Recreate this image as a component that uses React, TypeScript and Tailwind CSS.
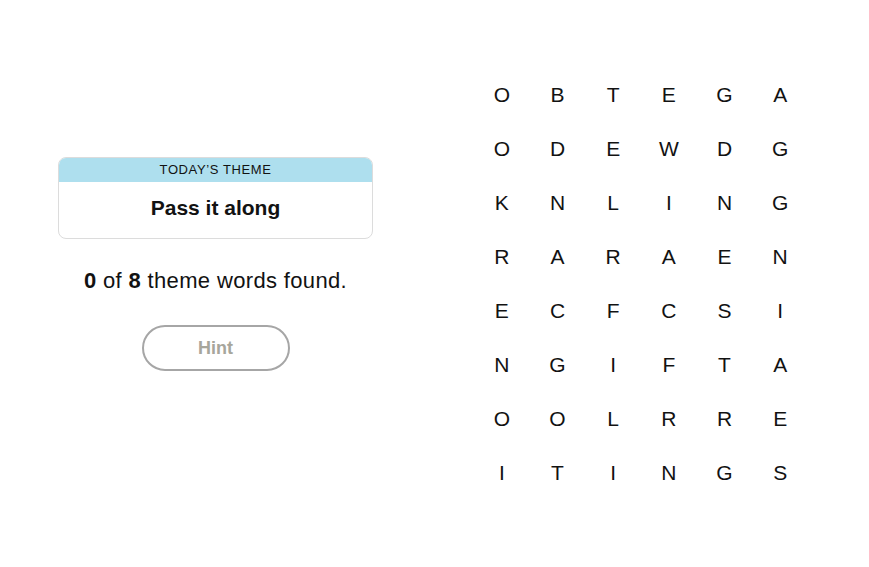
const grid = [
  'OBTEGA',
  'ODEWDG',
  'KNLING',
  'RARAEN',
  'ECFCSI',
  'NGIFTA',
  'OOLRRE',
  'ITINGS',
];

export default function App() {
  return (
    <div className="w-[869px] h-[567px] bg-white text-black font-['Liberation_Sans',Arial,sans-serif]">
      <div className="flex pl-[58px] pt-[68px]">
        {/* Left: theme + progress */}
        <div className="w-[315px] pt-[89px] flex flex-col items-center">
          <div className="w-full rounded-[8px] border border-[#dcdcdc] overflow-hidden">
            <div className="bg-[#aedfee] h-[24px] flex items-center justify-center text-[13px] tracking-[0.6px] text-[#121212]">
              TODAY’S THEME
            </div>
            <div className="h-[56px] pb-[4px] flex items-center justify-center text-[21px] font-bold text-[#121212]">
              Pass it along
            </div>
          </div>
          <p className="mt-[25px] text-[22px] tracking-[0.35px] text-[#121212]">
            <b>0</b> of <b>8</b> theme words found.
          </p>
          <button className="mt-[28px] w-[148px] h-[46px] rounded-full border-2 border-[#a6a6a6] text-[18px] font-bold text-[#a7a69c]">
            Hint
          </button>
        </div>

        {/* Right: letter grid */}
        <div className="ml-[101px] grid grid-cols-6 w-[334px]">
          {grid.flatMap((row, r) =>
            row.split('').map((ch, c) => (
              <div key={`${r}-${c}`} className="h-[54px] flex items-center justify-center text-[21px] text-[#121212]">
                {ch}
              </div>
            ))
          )}
        </div>
      </div>
    </div>
  );
}
